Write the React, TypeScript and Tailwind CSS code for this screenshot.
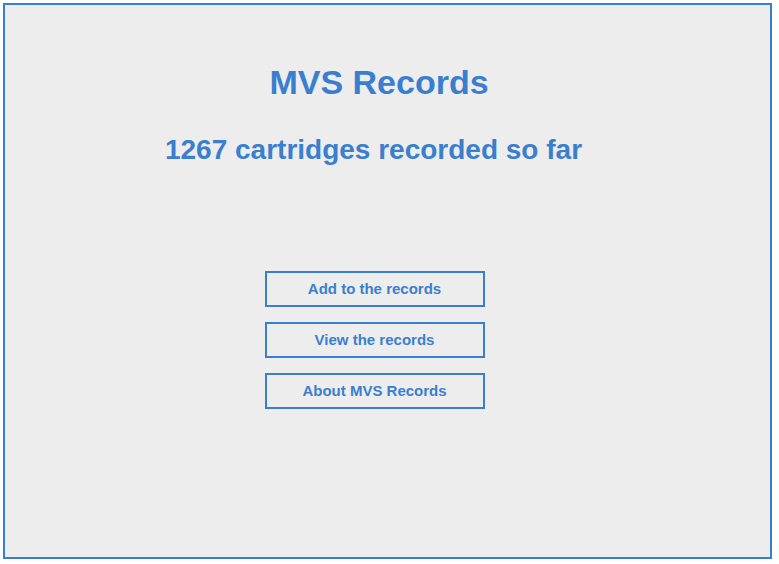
export default function App() {
  const buttons = ["Add to the records", "View the records", "About MVS Records"];
  return (
    <div className="h-[564px] w-[779px] bg-white pl-[3px] pt-[3px] font-['Liberation_Sans',Arial,sans-serif]">
      <div className="flex h-[556px] w-[769px] flex-col items-center border-2 border-[#3a7fcf] bg-[#ededed] pr-[14px] text-[#3a7fcf]">
        <h1 className="mt-[57px] pr-[3px] text-[34px] font-bold leading-[40px]">MVS Records</h1>
        <h2 className="mt-[31px] pr-[14px] text-[28px] font-bold leading-[34px]">1267 cartridges recorded so far</h2>
        <div className="mt-[104px] flex flex-col gap-[15px] pr-[12px]">
          {buttons.map((b) => (
            <button
              key={b}
              className="h-[36px] w-[220px] border-2 border-[#3a7fcf] bg-[#ededed] pt-px text-[15px] font-bold text-[#3a7fcf]"
            >
              {b}
            </button>
          ))}
        </div>
      </div>
    </div>
  );
}
